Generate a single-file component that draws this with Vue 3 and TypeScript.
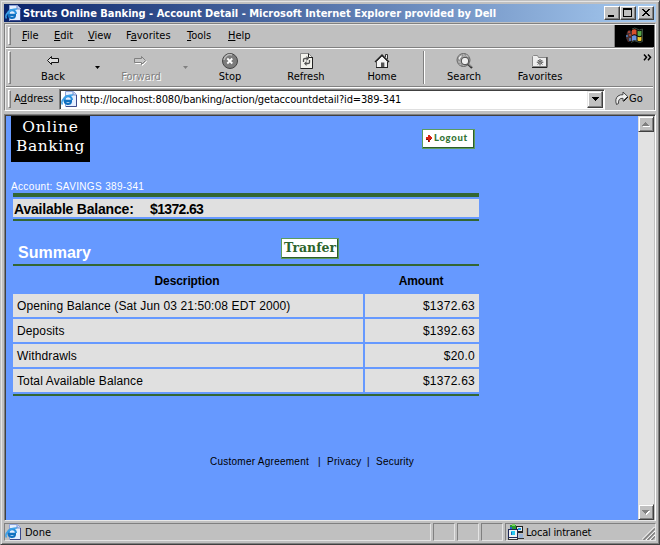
<script setup lang="ts">
interface MenuItem { key: string; before: string; after: string; cls: string }
interface Row { label: string; amount: string }

const menus: MenuItem[] = [
  { before: '', key: 'F', after: 'ile', cls: 'm-file' },
  { before: '', key: 'E', after: 'dit', cls: 'm-edit' },
  { before: '', key: 'V', after: 'iew', cls: 'm-view' },
  { before: 'F', key: 'a', after: 'vorites', cls: 'm-fav' },
  { before: '', key: 'T', after: 'ools', cls: 'm-tools' },
  { before: '', key: 'H', after: 'elp', cls: 'm-help' },
]

const rows: Row[] = [
  { label: 'Opening Balance (Sat Jun 03 21:50:08 EDT 2000)', amount: '$1372.63' },
  { label: 'Deposits', amount: '$1392.63' },
  { label: 'Withdrawls', amount: '$20.0' },
  { label: 'Total Available Balance', amount: '$1372.63' },
]
</script>

<template>
  <div class="window">
    <svg class="defs" width="0" height="0">
      <symbol id="ie" viewBox="0 0 16 16">
        <path d="M4.500.5h8l3 3v12h-11z" fill="#e4eeff" stroke="#8fa4d8" />
        <path d="M12 1v3h3" fill="#b8ccf4" stroke="#7a8fc8" />
        <path d="M15.500 4v11.500H5" fill="none" stroke="#3c4a8c" />
        <path d="M11 9.800H3.600a3.500 3.500 0 0 0 6.600 1.200" fill="none" stroke="#1070c0" stroke-width="2.200" />
        <path d="M3.200 8.900a3.800 3.800 0 0 1 7.700 0" fill="none" stroke="#2a90dc" stroke-width="2.200" />
        <path d="M1.500 13.500C-1 9.500 5 3.600 12 4" fill="none" stroke="#3ca0e8" stroke-width="1.500" />
      </symbol>
    </svg>

    <header class="titlebar">
      <svg class="ie16" viewBox="0 0 16 16"><use href="#ie" /></svg>
      <span class="title">Struts Online Banking - Account Detail - Microsoft Internet Explorer provided by Dell</span>
      <span class="wbtns">
        <span class="wbtn"><svg viewBox="0 0 12 10" shape-rendering="crispEdges"><path d="M2 7h6v2H2z" /></svg></span>
        <span class="wbtn"><svg viewBox="0 0 12 10" shape-rendering="crispEdges"><path fill-rule="evenodd" d="M1 0h9v9H1zM2 2v6h7V2z" /></svg></span>
        <span class="wbtn last"><svg viewBox="0 0 12 10" shape-rendering="crispEdges"><path d="M2 1h2v1h1v1h2V2h1V1h2v1H9v1H8v1H7v1h1v1h1v1h1v1H8V7H7V6H5v1H4v1H2V7h1V6h1V5h1V4H4V3H3V2H2z" /></svg></span>
      </span>
    </header>

    <section class="bars">
      <nav class="band menu">
        <i class="grip" />
        <span v-for="m in menus" :key="m.cls" :class="['mi', m.cls]">{{ m.before }}<u>{{ m.key }}</u>{{ m.after }}</span>
        <span class="throbber">
          <svg width="22" height="18" viewBox="0 0 22 18">
            <path d="M3 5l2-2 3 1v10l-4 1-2-4z" fill="#4c3030" />
            <path d="M4 4h2v2H4zM5 7h2v2H5z" fill="#a04438" />
            <path d="M2 8h2v2H2zM5 11h2v3H5z" fill="#4870a0" />
            <path d="M8 3q2.500-1.500 4.500 0v5q-2-1.500-4.500 0z" fill="#d8502c" />
            <path d="M13.500 3.500q2 1.500 4 0v5q-2 1.500-4 0z" fill="#58a848" />
            <path d="M8 9q2.500-1.500 4.500 0v5q-2-1.500-4.500 0z" fill="#6890dc" />
            <path d="M13.500 9.500q2 1.500 4 0v4q-2 1.500-4 0z" fill="#f0c830" />
            <path d="M8 2q3-2 5 0t5.500 0v12.500q-3 2-5.500 0t-6 1" fill="none" stroke="#3c4c40" />
          </svg>
        </span>
      </nav>

      <div class="band tools">
        <i class="grip" />
        <span class="tb back">
          <svg width="14" height="12" viewBox="0 0 14 12"><path d="M5.500 1.500L1.500 5.500l4 4V7.500h7v-4h-7z" fill="#ddd" stroke="#111" /></svg>
          Back
        </span>
        <i class="tri" />
        <span class="tb forward">
          <svg width="14" height="12" viewBox="0 0 14 12"><path d="M8.500 2.500l4 4-4 4v-2h-7v-4h7z" fill="none" stroke="#fff" /><path d="M7.500 1.500l4 4-4 4v-2h-7v-4h7z" fill="#c8c8c8" stroke="#808080" /></svg>
          Forward
        </span>
        <i class="tri dim" />
        <span class="tb stop">
          <svg width="16" height="16" viewBox="0 0 16 16"><circle cx="8" cy="8" r="7.500" fill="#7c7c7c" stroke="#444" /><path d="M2 7a6 6 0 0 1 8-5" fill="none" stroke="#bbb" stroke-width="1.500" /><path d="M5.300 5.500l5 5M10.300 5.500l-5 5" stroke="#fff" stroke-width="1.800" /></svg>
          Stop
        </span>
        <span class="tb refresh">
          <svg width="13" height="16" viewBox="0 0 13 16"><path d="M.5.5h8l4 4v11H.5z" fill="#f2f2ec" stroke="#888" /><path d="M12.500 4v11.500H.5M8.500.5v4h4" fill="none" stroke="#222" /><path d="M3.500 9V6.500Q3.500 5.500 5 5.500h2M9.500 7v2.500q0 1-1.500 1H6" fill="none" stroke="#555" stroke-width="1.300" /><path d="M6.500 3v5L9 5.500zM6.500 8v5L4 10.500z" fill="#555" /></svg>
          Refresh
        </span>
        <span class="tb home">
          <svg width="16" height="16" viewBox="0 0 16 16"><path d="M11.500 4V1.500h2V6" fill="#eee" stroke="#333" /><path d="M2.500 8.500L8 3l5.500 5.500v6h-11z" fill="#f4f4f4" stroke="#555" /><path d="M1 9l7-7 7 7" fill="none" stroke="#222" stroke-width="1.400" /><path d="M7 9.500h3V14H7z" fill="#555" /><path d="M10 9.500h1V14h-1z" fill="#bbb" /><path d="M2 14.500h12M13.500 9v6" stroke="#222" fill="none" /></svg>
          Home
        </span>
        <i class="vsep" />
        <span class="tb search">
          <svg width="17" height="16" viewBox="0 0 17 16"><circle cx="7.500" cy="7" r="6.500" fill="#b0b0b0" stroke="#666" /><path d="M2 5q2-4 5-3L5 5l-2 3zM9 1q4 1 4 4l-3-2zM2 10l3 1 1 2q-3-1-4-3z" fill="#ececec" stroke="#777" stroke-width=".7" /><circle cx="9" cy="8" r="3.800" fill="#eee" stroke="#444" /><path d="M12 11l4 4" stroke="#333" stroke-width="2.200" /><path d="M12.300 10.700l3 3" stroke="#ddd" stroke-width=".8" /></svg>
          Search
        </span>
        <span class="tb favs">
          <svg width="16" height="14" viewBox="0 0 16 14"><path d="M.5 12.500v-10l1-1h4l1 2h8v9z" fill="#eee" stroke="#888" /><path d="M15 3v10.500H0" fill="none" stroke="#222" /><path d="M8 5v6.500M4.800 8.200h6.500M5.800 6l4.500 4.500M10.300 6l-4.500 4.500" stroke="#444" /><path d="M7.500 7.700h1v1h-1z" fill="#fff" /></svg>
          Favorites
        </span>
        <svg class="chev" width="9" height="7" viewBox="0 0 9 7"><path d="M1 .5l2.500 2.800L1 6.200M5 .5l2.500 2.800L5 6.200" fill="none" stroke="#000" stroke-width="1.500" /></svg>
      </div>

      <div class="band address">
        <i class="grip" />
        <span class="alabel">A<u>d</u>dress</span>
        <div class="field">
          <svg class="ie16" viewBox="0 0 16 16"><use href="#ie" /></svg>
          <span class="url">http://localhost:8080/banking/action/getaccountdetail?id=389-341</span>
          <span class="drop"><svg width="7" height="4" viewBox="0 0 7 4" shape-rendering="crispEdges"><path d="M0 0h7v1H6v1H5v1H4v1H3V3H2V2H1V1H0z" /></svg></span>
        </div>
        <svg class="goicon" width="14" height="15" viewBox="0 0 14 15"><path d="M1.500 13.500Q-.5 8 3 5q2-1.500 5-1.300V1l4.700 4.500L8 10V7.300Q3 7 3.500 12.500z" fill="#eee" stroke="#444" /><path d="M13 6L8.500 10.500" stroke="#111" /></svg>
        <span class="go">Go</span>
      </div>
    </section>

    <div class="viewport">
      <main class="page">
        <div class="top">
          <div class="logo"><span class="l1">Online</span><span class="l2">Banking</span></div>
          <a class="btn logout">
            <svg width="6" height="7" viewBox="0 0 6 7" shape-rendering="crispEdges"><path d="M0 2h2V0h2v1h1v1h1v2H5v1H4v2H2V4H0z" fill="#d82010" /><path d="M2 5h1v2H2zM4 4h1v1H4zM0 4h2v1H0z" fill="#701010" /></svg>
            <span>Logout</span>
          </a>
        </div>
        <div class="acct">Account: SAVINGS 389-341</div>
        <div class="rule thick" />
        <div class="balance"><span class="bl">Available Balance:</span><span class="bv">$1372.63</span></div>
        <div class="rule" />
        <div class="sumrow">
          <h2>Summary</h2>
          <a class="btn transfer">Tranfer</a>
        </div>
        <div class="rule" />
        <div class="grid heads"><span>Description</span><span>Amount</span></div>
        <div v-for="r in rows" :key="r.label" class="grid line">
          <span class="desc">{{ r.label }}</span><span class="amt">{{ r.amount }}</span>
        </div>
        <div class="rule" />
        <footer class="foot">
          <span class="f1">Customer Agreement</span><span class="f2">|</span><span class="f3">Privacy</span><span class="f4">|</span><span class="f5">Security</span>
        </footer>
      </main>
      <aside class="scroll">
        <span class="sb"><svg width="8" height="5" viewBox="0 0 8 5" shape-rendering="crispEdges"><path d="M4 1h1v1h1v1h1v1h1v1H1V4h1V3h1V2h1z" fill="#fff" /><path d="M3 0h1v1h1v1h1v1h1v1H0V3h1V2h1V1h1z" fill="#808080" /></svg></span>
        <span class="sb"><svg width="8" height="5" viewBox="0 0 8 5" shape-rendering="crispEdges"><path d="M1 1h7v1H7v1H6v1H5v1H4V4H3V3H2V2H1z" fill="#fff" /><path d="M0 0h7v1H6v1H5v1H4v1H3V3H2V2H1V1H0z" fill="#808080" /></svg></span>
      </aside>
    </div>

    <div class="status">
      <span class="panel grow"><svg class="ie16" viewBox="0 0 16 16"><use href="#ie" /></svg><span class="done">Done</span></span>
      <span class="panel sm" /><span class="panel sm" /><span class="panel sm" />
      <span class="panel zone">
        <svg width="17" height="16" viewBox="0 0 17 16" shape-rendering="crispEdges">
          <path d="M3 1h6v6H3z" fill="#2a9a30" /><path d="M5 0h3v2H5z" fill="#7cd860" /><path d="M3 3h2v3H3z" fill="#2860c8" />
          <path d="M9 2h7v7H9z" fill="#222" /><path d="M10 3h5v4h-5z" fill="#e8e8e8" /><path d="M11 4h3v2h-3z" fill="#20a0e8" />
          <path d="M1 5h10v9H1z" fill="#1c2858" /><path d="M2 6h8v7H2z" fill="#f0f0f0" /><path d="M4 7h4v4H4z" fill="#28c8f0" /><path d="M4 8h1v3H4z" fill="#1868b0" />
          <path d="M1 14h10v2H1z" fill="#333" /><path d="M2 14h8v1H2z" fill="#eee" /><path d="M12 10h4v4h-4z" fill="#9ab4d8" /><path d="M11 14h6v1h-6z" fill="#333" />
        </svg>
        <span class="zt">Local intranet</span>
        <svg class="size" width="13" height="13" viewBox="0 0 13 13"><path d="M0 12.500L12.500 0M4 13L13 4M8 13l5-5" stroke="#fff" /><path d="M1.500 13L13 1.500M5.500 13L13 5.500M9.500 13L13 9.500" stroke="#808080" stroke-width="1.500" /></svg>
      </span>
    </div>
  </div>
</template>

<style>
body { background: #c0c0c0; overflow: hidden; }
</style>

<style scoped>
* { box-sizing: border-box; }
.window {
  width: 660px; height: 545px; display: flex; flex-direction: column;
  padding: 2px; background: #c0c0c0; color: #000;
  border: 1px solid #c0c0c0; border-right-color: #404040; border-bottom-color: #404040;
  box-shadow: inset 1px 1px #e4e4e4, inset -1px -1px #808080;
  font: 11px/13px "DejaVu Sans Condensed", "DejaVu Sans", sans-serif;
  white-space: nowrap;
}
.defs { display: block; height: 0; flex: none; }
svg { display: block; flex: none; }
.ie16 { width: 16px; height: 16px; }
u { text-decoration: underline; text-underline-offset: 1px; text-decoration-thickness: 1px; }

.titlebar {
  height: 18px; margin: 1px 1px 0; padding: 0 2px 0 1px; display: flex; align-items: center; flex: none;
  background: linear-gradient(90deg, #0a246a, #a6caf0); color: #fff; font-weight: bold;
}
.title { margin-left: 2px; flex: 1; }
.wbtns { display: flex; }
.wbtn {
  width: 16px; height: 14px; padding: 1px; background: #c0c0c0;
  border: 1px solid #fff; border-right-color: #404040; border-bottom-color: #404040;
  box-shadow: inset -1px -1px #808080;
}
.wbtn svg { width: 12px; height: 10px; }
.last { margin-left: 2px; }

.bars { height: 88px; margin: 1px 1px 0; flex: none; display: flex; flex-direction: column; border: 1px solid #808080; border-right-color: #fff; border-bottom-color: #fff; box-shadow: inset 1px 1px #e8e8e8, inset -1px 0 #808080; padding: 1px 2px 0 1px; }
.band { display: flex; position: relative; }
.grip { width: 3px; margin-left: 2px; border: 1px solid #fff; border-right-color: #808080; border-bottom-color: #808080; flex: none; }
.menu { height: 23px; border-bottom: 1px solid #808080; align-items: center; }
.menu .grip { height: 18px; }
.mi { flex: none; margin-top: -1px; }
.m-file { width: 32px; margin-left: 11px; }
.m-edit { width: 34px; }
.m-view { width: 38px; }
.m-fav { width: 61px; }
.m-tools { width: 41px; }
.m-help { flex: 1; }
.throbber { width: 40px; height: 22px; margin-right: -1px; background: #000; border-left: 1px solid #808080; display: flex; align-items: center; justify-content: center; }

.tools { height: 39px; border-top: 1px solid #fff; border-bottom: 1px solid #808080; }
.tools .grip { height: 33px; margin-top: 2px; }
.tb { height: 100%; display: flex; flex-direction: column; align-items: center; justify-content: flex-end; padding: 2px 0 3px; flex: none; }
.tb svg { margin: auto 0; }
.back { width: 44px; margin-left: 20px; }
.tri { width: 5px; height: 3px; margin: 17px 0 0 20px; background: #000; clip-path: polygon(0 0, 100% 0, 50% 100%); flex: none; }
.tri.dim { background: #808080; }
.forward { width: 44px; margin-left: 19px; color: #808080; text-shadow: 1px 1px #fff; }
.stop { width: 44px; margin-left: 20px; }
.refresh { width: 50px; margin-left: 29px; }
.home { width: 44px; margin-left: 29px; }
.vsep { width: 2px; height: 33px; margin: 2px 0 0 19px; border-left: 1px solid #808080; border-right: 1px solid #fff; flex: none; }
.search { width: 44px; margin-left: 17px; }
.favs { width: 50px; margin-left: 29px; }
.chev { margin: 5px 1px 0 auto; }

.address { height: 23px; border-top: 1px solid #fff; align-items: center; }
.address .grip { height: 18px; }
.alabel { margin: -2px 0 0 3px; width: 45px; flex: none; }
.field { width: 546px; height: 21px; padding: 0 1px 0 2px; display: flex; align-items: center; background: #fff; border: 1px solid #808080; border-right-color: #fff; border-bottom-color: #dfdfdf; box-shadow: inset 1px 1px #404040; }
.field .ie16 { margin-left: -1px; }
.url { margin-left: 3px; flex: 1; letter-spacing: -.15px; }
.drop { width: 16px; height: 17px; display: flex; align-items: center; justify-content: center; background: #c0c0c0; border: 1px solid #e8e8e8; border-right-color: #404040; border-bottom-color: #404040; box-shadow: inset -1px -1px #808080, inset 1px 1px #fff; }
.goicon { margin: -1px 0 0 10px; }
.go { margin-top: -2px; }

.viewport { height: 407px; margin: 3px 1px 0; display: flex; flex: none; border: 1px solid #808080; border-right-color: #fff; border-bottom-color: #e8e8e8; box-shadow: inset 1px 1px #404040; padding: 1px 0 0 1px; }
.page { width: 632px; height: 404px; background: #69f; padding-left: 5px; font-family: "Liberation Sans", Arial, sans-serif; }
.scroll { width: 16px; height: 404px; background: #e2e2e2; display: flex; flex-direction: column; justify-content: space-between; }
.sb { width: 16px; height: 16px; display: flex; align-items: center; justify-content: center; background: #c0c0c0; border: 1px solid #dfdfdf; border-right-color: #404040; border-bottom-color: #404040; box-shadow: inset 1px 1px #fff, inset -1px -1px #808080; }

.top { display: flex; height: 46px; }
.logo { width: 79px; height: 46px; background: #000; color: #fff; font: 15.500px/19px "DejaVu Serif", serif; display: flex; flex-direction: column; align-items: center; padding-top: 2px; }
.l1 { letter-spacing: .8px; }
.l2 { letter-spacing: .6px; }
.btn { display: flex; align-items: center; background: #fff; border: 1px solid #5c9c5c; box-shadow: inset -1px -1px #2c5c2c; color: #2c642c; font-weight: bold; }
.logout { width: 53px; height: 20px; margin: 13px 0 0 332px; padding: 0 0 2px 3px; font: 900 9.500px/12px Lato, sans-serif; }
.logout span { margin-left: 2px; letter-spacing: .7px; color: #347434; }
.acct { height: 31px; padding-top: 18px; font-size: 10px; line-height: 13px; letter-spacing: .35px; color: #fff; }
.rule { width: 466px; height: 2px; margin-left: 2px; background: #363; }
.thick { height: 4px; }
.balance { width: 466px; height: 18px; margin: 2px 0 2px 2px; background: #e0e0e0; display: flex; font: bold 14px/20px "Liberation Sans", Arial, sans-serif; }
.bl { width: 137px; padding-left: 1px; letter-spacing: -.2px; }
.bv { letter-spacing: -.65px; }
.sumrow { height: 43px; display: flex; }
h2 { margin: 23px 0 0 7px; width: 263px; font-size: 16px; line-height: 18px; color: #fff; }
.transfer { width: 58px; height: 21px; margin-top: 17px; padding: 0 0 2px 2px; font: bold 12.500px/14px "DejaVu Serif", serif; }
.grid { width: 466px; margin-left: 2px; display: grid; grid-template-columns: 350px 114px; column-gap: 2px; }
.heads { height: 28px; padding: 7px 2px 0 0; margin-right: 2px; text-align: center; font-size: 12px; font-weight: bold; line-height: 16px; letter-spacing: -.1px; }
.heads span { padding-right: 2px; }
.line { height: 23px; margin-bottom: 2px; font-size: 12px; line-height: 24px; }
.line span { background: #e0e0e0; height: 23px; padding: 0 4px; }
.desc { letter-spacing: .12px; }
.amt { text-align: right; letter-spacing: .25px; }
.foot { display: flex; margin-top: 59px; padding-left: 199px; font-size: 10px; line-height: 13px; letter-spacing: .25px; }
.f1 { width: 108px; }
.f2 { width: 9px; }
.f3 { width: 40px; }
.f4 { width: 9px; }

.status { height: 18px; margin: 2px 1px 0; display: flex; gap: 2px; flex: none; }
.panel { height: 18px; display: flex; align-items: center; border: 1px solid #808080; border-right-color: #e4e4e4; border-bottom-color: #e4e4e4; }
.grow { width: 427px; }
.done { margin-left: 4px; }
.sm { width: 22px; }
.zone { width: 151px; padding-left: 1px; }
.zt { margin-left: 2px; letter-spacing: -.2px; flex: 1; }
.size { align-self: flex-end; }
</style>
